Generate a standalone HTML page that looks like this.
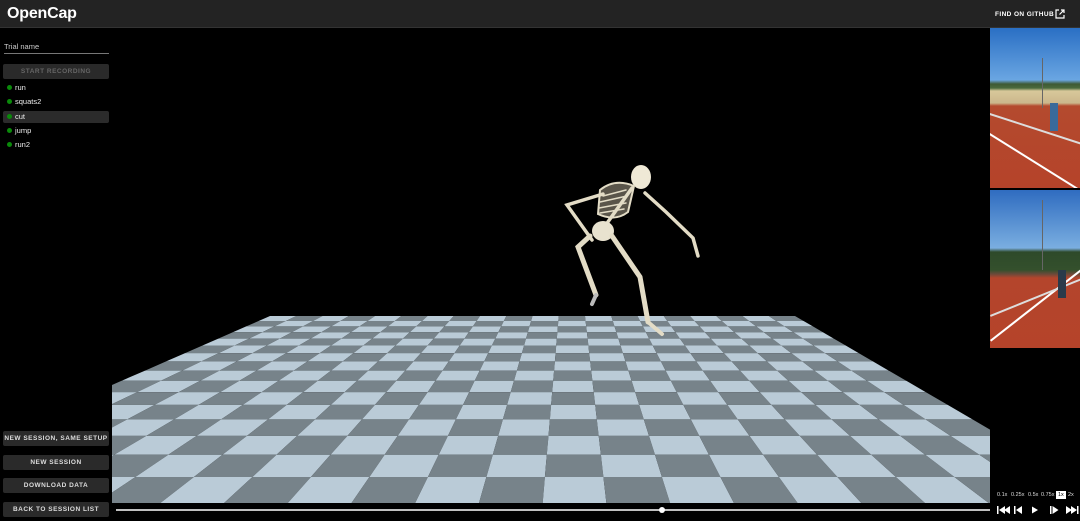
<!DOCTYPE html>
<html><head><meta charset="utf-8"><style>
*{margin:0;padding:0;box-sizing:border-box}
body{width:1080px;height:521px;background:#000;overflow:hidden;font-family:"Liberation Sans",sans-serif;position:relative;color:#fff}
.hdr{position:absolute;left:0;top:0;width:1080px;height:28px;background:#232323;border-bottom:1px solid #333}
.logo{position:absolute;left:7px;top:5px;font-size:16px;font-weight:bold;letter-spacing:-0.2px}
.gh{position:absolute;left:995px;top:11px;font-size:6.5px;font-weight:bold;letter-spacing:0.4px}
.inp{position:absolute;left:4px;top:42px;font-size:7.5px;color:#ccc;width:105px;height:12px;border-bottom:1.5px solid #777}
.btn{position:absolute;left:3px;width:106px;height:15px;background:#2a2a2a;border-radius:2px;font-size:6.5px;font-weight:bold;text-align:center;line-height:15px;letter-spacing:0.5px;color:#ddd}
.item{position:absolute;left:3px;width:106px;height:12px;font-size:7.5px;line-height:12px;padding-left:12px;color:#eee;border-radius:2px}
.item:before{content:"";position:absolute;left:4px;top:3px;width:5px;height:5px;border-radius:50%;background:#0a8a0a}
.spd{position:absolute;top:492px;font-size:5.5px;color:#ddd}
</style></head><body>
<div class="hdr"><div class="logo">OpenCap</div><div class="gh">FIND ON GITHUB</div>
<svg style="position:absolute;left:1055px;top:9px" width="10" height="10" viewBox="0 0 10 10" fill="none" stroke="#fff" stroke-width="1.2"><path d="M4 1H1V9H9V6M6 1H9V4M9 1L4.5 5.5"/></svg></div>
<div class="inp">Trial name</div>
<div class="btn" style="top:64px;color:#666">START RECORDING</div>
<div class="item" style="top:82px">run</div>
<div class="item" style="top:96px">squats2</div>
<div class="item" style="top:111px;background:#2b2b2b">cut</div>
<div class="item" style="top:125px">jump</div>
<div class="item" style="top:139px">run2</div>
<div class="btn" style="top:431px">NEW SESSION, SAME SETUP</div>
<div class="btn" style="top:455px">NEW SESSION</div>
<div class="btn" style="top:478px">DOWNLOAD DATA</div>
<div class="btn" style="top:502px">BACK TO SESSION LIST</div>

<svg id="floor" style="position:absolute;left:0;top:0" width="1080" height="521">
<defs><clipPath id="vc"><rect x="112" y="28" width="878" height="475"/></clipPath></defs>
<g id="fg" clip-path="url(#vc)"></g>
<g stroke="#e3dcc6" stroke-linecap="round" fill="none">
<ellipse cx="641" cy="177" rx="10" ry="12" fill="#efe9d6" stroke="none"/>
<path d="M600 190 Q615 178 634 186 L628 212 Q615 222 598 214 Z" fill="#5a554a" stroke-width="2"/>
<path d="M603 196 L626 190 M600 202 L627 196 M599 208 L626 203 M600 213 L624 209" stroke-width="1.5"/>
<path d="M632 188 L605 226" stroke-width="3.5"/>
<path d="M603 194 L567 205 L592 240" stroke-width="3.5"/>
<path d="M645 193 L666 212 L693 238 L698 256" stroke-width="3.5"/>
<ellipse cx="603" cy="231" rx="11" ry="10" fill="#e8e2cf" stroke="none"/>
<path d="M590 236 L578 247 L596 295" stroke-width="5"/>
<path d="M596 295 L592 304" stroke-width="4" stroke="#bbb"/>
<path d="M612 236 L640 277 L648 322" stroke-width="5"/>
<path d="M648 322 L662 334" stroke-width="4"/>
</g>
<line x1="116" y1="510" x2="990" y2="510" stroke="#fff" stroke-width="1.5"/>
<circle cx="662" cy="510" r="3" fill="#fff"/>
</svg>

<div style="position:absolute;left:990px;top:28px;width:90px;height:160px;overflow:hidden;background:linear-gradient(#2a6fc4 0,#6aa6e2 52px,#3f5a34 56px,#4b6a3c 60px,#d8c89a 63px,#cbb78c 75px,#b44a2e 78px,#b5432a 160px)">
<div style="position:absolute;left:0;top:105px;width:120px;height:1.5px;background:#fff;transform:rotate(32deg);transform-origin:0 0"></div>
<div style="position:absolute;left:0;top:85px;width:120px;height:1.5px;background:#ddd;transform:rotate(18deg);transform-origin:0 0"></div>
<div style="position:absolute;left:52px;top:30px;width:1px;height:50px;background:#666"></div>
<div style="position:absolute;left:60px;top:75px;width:8px;height:28px;background:#3a6a9a"></div></div>
<div style="position:absolute;left:990px;top:190px;width:90px;height:158px;overflow:hidden;background:linear-gradient(#2f6cc0 0,#7aaee0 58px,#2e4a2a 62px,#34502c 80px,#6a4a3a 84px,#b4452c 88px,#b5432a 158px)">
<div style="position:absolute;left:0;top:150px;width:120px;height:1.5px;background:#fff;transform:rotate(-38deg);transform-origin:0 0"></div>
<div style="position:absolute;left:0;top:125px;width:120px;height:1.5px;background:#ddd;transform:rotate(-22deg);transform-origin:0 0"></div>
<div style="position:absolute;left:52px;top:10px;width:1px;height:70px;background:#666"></div>
<div style="position:absolute;left:68px;top:80px;width:8px;height:28px;background:#2a3a4a"></div></div>

<div class="spd" style="left:997px">0.1x</div>
<div class="spd" style="left:1011px">0.25x</div>
<div class="spd" style="left:1028px">0.5x</div>
<div class="spd" style="left:1041px">0.75x</div>
<div class="spd" style="left:1056px;top:491px;background:#fff;color:#000;padding:1px 2px">1x</div>
<div class="spd" style="left:1068px">2x</div>
<svg style="position:absolute;left:995px;top:504px" width="85" height="12" viewBox="0 0 85 12" fill="#fff">
<path d="M2 2h1.5v8H2zM10 2v8L4 6zM15 2v8L9 6z"/>
<path d="M19 2h1.5v8H19zM27 2v8L21 6z"/>
<path d="M37 2.5v7L43 6z"/>
<path d="M55 2h1.5v8H55zM57.5 2v8L63.5 6z"/>
<path d="M71 2v8L77 6zM76 2v8L82 6zM82 2h1.5v8H82z"/>
</svg>

<script>
var g=document.getElementById('fg'),s='';
function P(X,y){return (570+X*(y-185)/131).toFixed(1)+','+y.toFixed(1);}
var a=1/131,b=1/318,R=16,C=20;
function Y(j){return 185+1/(a+(b-a)*j/R);}
for(var j=0;j<R;j++){var y0=Y(j),y1=Y(j+1);
for(var i=0;i<C;i++){var X0=-300+26.25*i,X1=X0+26.25;
var c=((i+j)%2==0)?'#bacbd7':'#77838a';
s+='<polygon fill="'+c+'" points="'+P(X0,y0)+' '+P(X1,y0)+' '+P(X1,y1)+' '+P(X0,y1)+'"/>';}}
g.innerHTML=s;
</script>
</body></html>
